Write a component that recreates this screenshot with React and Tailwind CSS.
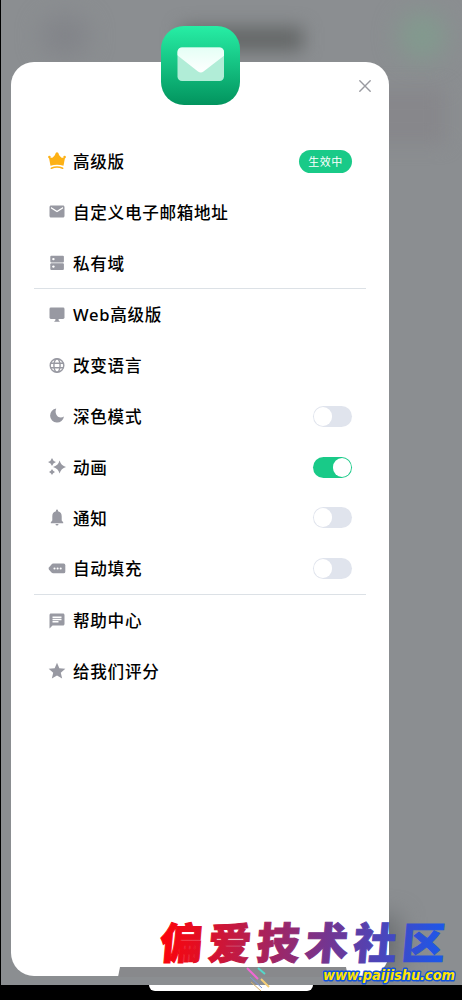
import clsx from "clsx";
import { MdEmail, MdChat, MdStar } from "react-icons/md";

function Crown() {
  return (
    <svg viewBox="0 0 18 18" className="size-[18px] fill-[#fdb115]">
      <circle cx="1.4" cy="5.1" r="1.3" />
      <circle cx="9" cy="1.8" r="1.5" />
      <circle cx="16.6" cy="5.1" r="1.3" />
      <path d="M.9 5.2 Q3.800 6.600 5.200 5 Q6.800 3.600 7.600 1.800 H10.400 Q11.200 3.600 12.800 5 Q14.200 6.600 17.100 5.200 L15.500 13.700 Q9 11.700 2.500 13.700 Z" />
      <path
        d="M3.3 16.2 Q9 14 14.7 16.2"
        fill="none"
        stroke="#fdb115"
        strokeWidth="1.5"
        strokeLinecap="round"
      />
    </svg>
  );
}

function Server() {
  return (
    <svg viewBox="0 0 18 18" className="size-[18px]">
      <g fill="currentColor">
        <rect x="2.3" y="1.8" width="13.6" height="6.600" rx="1" />
        <rect x="2.3" y="9.300" width="13.6" height="6.600" rx="1" />
      </g>
      <g fill="white">
        <circle cx="5.4" cy="5.1" r="1.2" />
        <circle cx="5.4" cy="12.6" r="1.2" />
      </g>
    </svg>
  );
}

function Monitor() {
  return (
    <svg viewBox="0 0 18 18" className="size-[18px]" fill="currentColor">
      <rect x="1.5" y="1.5" width="15" height="11.5" rx="1.4" />
      <path d="M7.400 12.500h3.200v1.700l1.400 1.500H6l1.400-1.500z" />
    </svg>
  );
}

function Globe() {
  return (
    <svg
      viewBox="0 0 18 18"
      className="size-[18px]"
      fill="none"
      stroke="currentColor"
      strokeWidth="1.4"
    >
      <circle cx="9" cy="8.5" r="6.800" />
      <ellipse cx="9" cy="8.5" rx="3.100" ry="6.800" />
      <path d="M2.700 6.300h12.600M2.700 10.700h12.600" />
    </svg>
  );
}

function Moon() {
  return (
    <svg viewBox="0 0 18 18" className="size-[18px]" fill="currentColor">
      <path d="M8.2 1.600A7 7 0 1 0 16 9.600Q12.800 11.400 10 9.700Q6.400 6.800 8.200 1.600Z" />
    </svg>
  );
}

function Sparkles() {
  return (
    <svg viewBox="0 0 18 18" className="size-[18px]" fill="currentColor">
      <path d="M11.6 2.400Q13 7.500 18 8.900Q13 10.300 11.600 15.600Q10.200 10.300 5 8.900Q10.200 7.500 11.600 2.400Z" />
      <path d="M4 0Q4.900 3.100 8 4Q4.900 4.900 4 8Q3.100 4.900 0 4Q3.100 3.100 4 0Z" />
      <path d="M4 11Q4.800 13.200 7 14Q4.800 14.800 4 17Q3.200 14.800 1 14Q3.200 13.200 4 11Z" />
    </svg>
  );
}

function Bell() {
  return (
    <svg viewBox="0 0 18 18" className="size-[18px]" fill="currentColor">
      <path d="M8 2.2V1.5a1 1 0 0 1 2 0v.7C12.700 2.800 13.700 4.900 13.700 7.300V11.600L15.200 13.200V14.200H2.800V13.200L4.300 11.600V7.300C4.300 4.900 5.300 2.800 8 2.200Z" />
      <path d="M7.500 14.900h3a1.500 1.500 0 0 1-3 0z" />
    </svg>
  );
}

function Autofill() {
  return (
    <svg viewBox="0 0 18 18" className="size-[18px]">
      <path
        fill="currentColor"
        d="M5.200 3.600H15.700Q17.300 3.600 17.300 5.200V11.700Q17.300 13.300 15.700 13.300H5.200Q4.200 13.300 3.500 12.500L.900 9.400Q.300 8.500 .900 7.600L3.500 4.400Q4.200 3.600 5.200 3.600Z"
      />
      <g fill="white">
        <circle cx="6.500" cy="8.500" r="1.050" />
        <circle cx="9.600" cy="8.500" r="1.050" />
        <circle cx="12.700" cy="8.500" r="1.050" />
      </g>
    </svg>
  );
}

const groups = [
  [
    { icon: <Crown />, label: "高级版", badge: "生效中" },
    {
      icon: <MdEmail className="size-[19px] mb-px" />,
      label: "自定义电子邮箱地址",
    },
    { icon: <Server />, label: "私有域" },
  ],
  [
    { icon: <Monitor />, label: "Web高级版" },
    { icon: <Globe />, label: "改变语言" },
    { icon: <Moon />, label: "深色模式", on: false },
    { icon: <Sparkles />, label: "动画", on: true },
    { icon: <Bell />, label: "通知", on: false },
    { icon: <Autofill />, label: "自动填充", on: false },
  ],
  [
    { icon: <MdChat className="size-[18px]" />, label: "帮助中心" },
    { icon: <MdStar className="size-5 shrink-0 mb-px" />, label: "给我们评分" },
  ],
];

function Toggle({ on }) {
  return (
    <span
      className={clsx(
        "flex w-[39px] h-[21px] rounded-full p-px items-center",
        on ? "bg-[#19ca88] justify-end" : "bg-[#e0e4ed]",
      )}
    >
      <span className="w-[18px] h-[19px] rounded-full bg-white" />
    </span>
  );
}

function Row({ icon, label, badge, on }) {
  return (
    <li className="flex items-center h-[50.8px] px-3.5">
      <span className="flex justify-center text-[#9899a2] w-[18px] mr-[7px]">
        {icon}
      </span>
      <span className="pt-0.5 text-[16.6px] tracking-[0.7px] font-medium text-black leading-none whitespace-nowrap">
        {label}
      </span>
      {badge && (
        <span className="ml-auto flex items-center justify-center w-[53px] h-[23px] pt-px rounded-full bg-[#19ca88] text-white text-[11px] tracking-[0.5px]">
          {badge}
        </span>
      )}
      {on !== undefined && (
        <span className="ml-auto">
          <Toggle on={on} />
        </span>
      )}
    </li>
  );
}

function Logo() {
  return (
    <svg viewBox="0 0 79 79" className="size-[79px] -mt-9">
      <defs>
        <linearGradient id="tile" x1="0" y1="0" x2="0" y2="1">
          <stop offset="0" stopColor="#27eea5" />
          <stop offset="1" stopColor="#02945e" />
        </linearGradient>
        <linearGradient id="flap" x1="0" y1="0" x2="0" y2="1">
          <stop offset="0" stopColor="#e4fff5" />
          <stop offset="1" stopColor="#ffffff" />
        </linearGradient>
        <clipPath id="envelope">
          <rect x="16.500" y="21.500" width="46.500" height="33.500" rx="4.500" />
        </clipPath>
      </defs>
      <rect width="79" height="79" rx="23" fill="url(#tile)" />
      <g clipPath="url(#envelope)">
        <rect x="16" y="21" width="48" height="35" fill="#b1edd7" />
        <path
          d="M16 21H64V29L42.500 45.500Q39.800 47.700 37 45.500L16 29Z"
          fill="url(#flap)"
        />
      </g>
    </svg>
  );
}

function Drawer() {
  return (
    <div className="relative w-[378px] h-[914px] ml-2.5 rounded-[23px] bg-white px-[23px]">
      <header className="grid grid-cols-[1fr_79px_1fr] h-[74px]">
        <span />
        <Logo />
        <svg
          viewBox="0 0 12 12"
          className="justify-self-end mt-[18px] -mr-[5px] size-3"
          stroke="#999aa0"
          strokeWidth="1.4"
          strokeLinecap="round"
        >
          <path d="M.8 .8L11.2 11.2M11.2 .8L.8 11.2" />
        </svg>
      </header>
      {groups.map((rows, i) => (
        <ul
          key={i}
          className={clsx("w-[332px]", i > 0 && "border-t border-[#dce1e6]")}
        >
          {rows.map((row) => (
            <Row key={row.label} {...row} />
          ))}
        </ul>
      ))}
    </div>
  );
}

// site mark laid over the bottom right corner
function Watermark() {
  return (
    <svg
      viewBox="0 0 310 90"
      className="absolute right-0 bottom-0 w-[310px] h-[90px]"
      strokeWidth="2"
    >
      <defs>
        <linearGradient
          id="mark"
          gradientUnits="userSpaceOnUse"
          x1="8"
          y1="0"
          x2="296"
          y2="0"
        >
          <stop offset="0" stopColor="#ff030a" />
          <stop offset="0.130" stopColor="#e50d20" />
          <stop offset="0.600" stopColor="#713693" />
          <stop offset="1" stopColor="#1b58ec" />
        </linearGradient>
      </defs>
      <path d="M95 58L106 69" stroke="#ef67d5" />
      <path d="M106 58L113 64" stroke="#54d8ca" />
      <path d="M109 69L117 77" stroke="#f5cf78" />
      <path d="M98 67L110 78" stroke="#7895df" strokeWidth="1" />
      <path d="M99 72L109 81" stroke="#d6af68" strokeWidth="1" />
      <text
        x="11"
        y="49"
        textLength="285"
        transform="skewX(-5)"
        fill="url(#mark)"
        stroke="url(#mark)"
        strokeWidth="1"
        className="text-[43px] font-black"
      >
        偏爱技术社区
      </text>
      <text
        x="171"
        y="70"
        textLength="132"
        lengthAdjust="spacingAndGlyphs"
        fill="#ffe500"
        stroke="#1254da"
        strokeWidth="3"
        strokeLinejoin="round"
        paintOrder="stroke"
        className="font-['DejaVu_Sans',sans-serif] text-[14px] font-bold italic"
      >
        www.paijishu.com
      </text>
    </svg>
  );
}

export default function App() {
  return (
    <div className="relative w-[462px] h-[1000px] bg-black overflow-hidden pl-px font-['Noto_Sans','Noto_Sans_CJK_SC',sans-serif]">
      <div className="relative h-[985px] bg-[#8b8e91] pt-[62px] overflow-hidden">
        <div className="absolute left-10 top-4 w-12 h-10 rounded-full bg-[#828489] blur-md" />
        <div className="absolute left-[180px] top-[27px] w-[122px] h-6 bg-[#636666] blur-[9px]" />
        <div className="absolute left-[397px] top-3 w-12 h-12 rounded-full bg-[#829a8e] blur-md" />
        <div className="absolute left-[330px] top-[88px] w-[114px] h-14 bg-[#87878b] blur-[9px]" />
        <div className="absolute left-[350px] top-[917px] w-12 h-14 bg-[#696c6e] blur-md" />
        <Drawer />
        {/* bottom sheet edge showing over the drawer */}
        <svg
          viewBox="0 0 230 10"
          className="relative ml-[117px] -mt-[9px] w-[230px] h-2.5"
        >
          <path d="M2 0H228L230 10H0Z" fill="#88898c" />
        </svg>
      </div>
      <div className="ml-[148px] w-[164px] h-1.5 rounded-b-full bg-white" />
      <Watermark />
    </div>
  );
}
